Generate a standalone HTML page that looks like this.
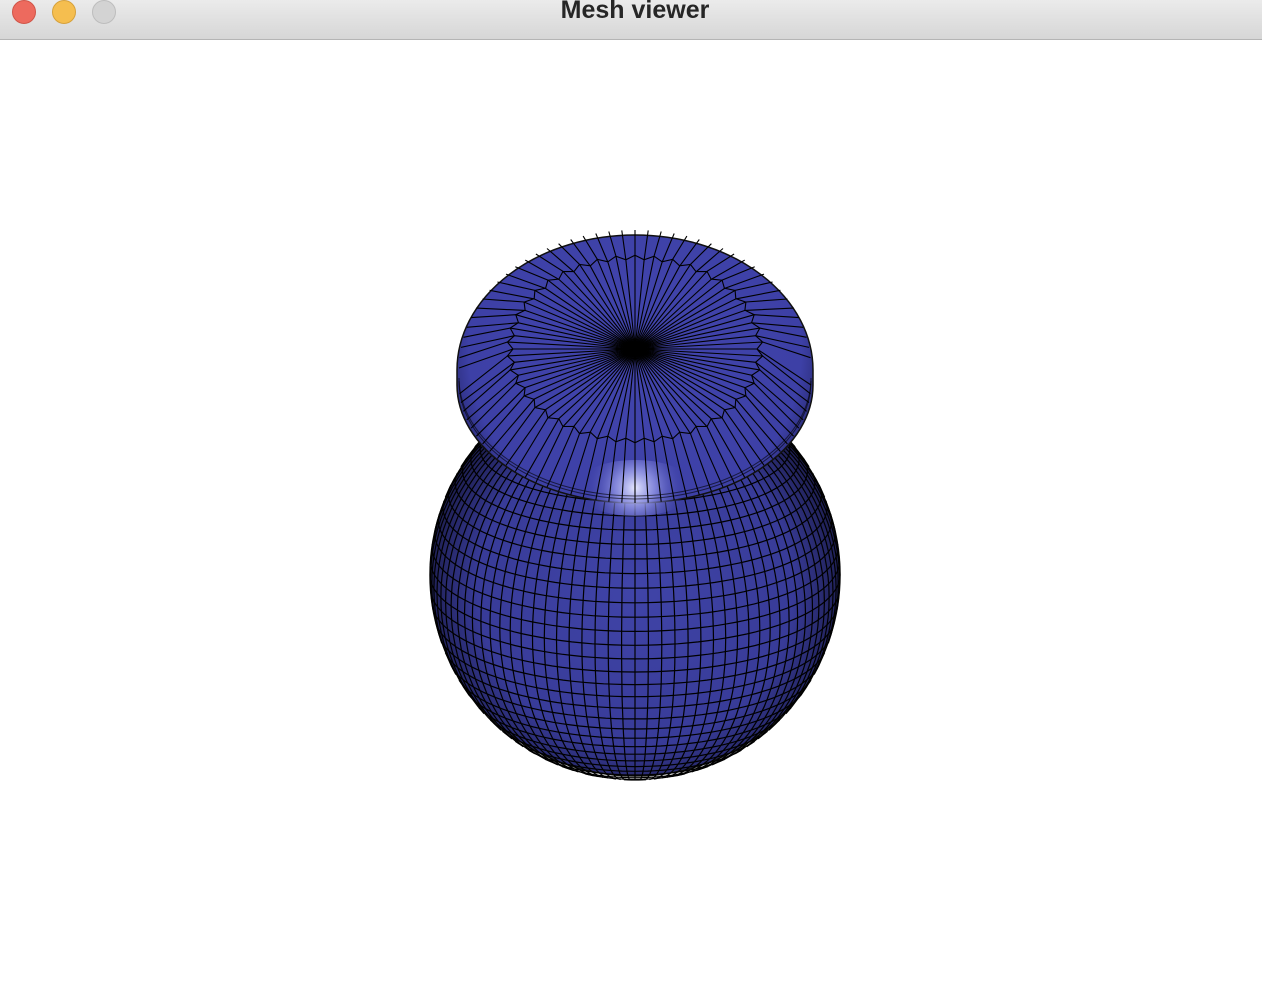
<!DOCTYPE html>
<html><head><meta charset="utf-8"><style>
html,body{margin:0;padding:0;width:1262px;height:994px;overflow:hidden;background:#fff}
.tb{position:absolute;left:0;top:0;width:1262px;height:39px;background:linear-gradient(#ebebeb,#d6d6d6);border-bottom:1px solid #b4b4b4}
.d{position:absolute;top:0;width:24px;height:24px;border-radius:50%}
.t{position:absolute;left:4px;width:1262px;top:-4px;text-align:center;font:bold 25px "Liberation Sans",sans-serif;color:#262626}
svg{position:absolute;left:0;top:0}
</style></head><body>
<div class="tb"><div class="d" style="left:12px;background:#ed6a5e;border:1px solid #d05548;box-sizing:border-box"></div><div class="d" style="left:52px;background:#f5be4f;border:1px solid #d6a13b;box-sizing:border-box"></div><div class="d" style="left:92px;background:#d3d3d3;border:1px solid #bdbdbd;box-sizing:border-box"></div><div class="t">Mesh viewer</div></div>
<svg id="s" width="1262" height="994" viewBox="0 0 1262 994">
<defs>
<radialGradient id="gb" cx="635" cy="590" r="210" gradientUnits="userSpaceOnUse"><stop offset="0" stop-color="#4044a8"/><stop offset="0.75" stop-color="#383b98"/><stop offset="1" stop-color="#1d1e50"/></radialGradient>
<radialGradient id="gc" cx="635" cy="350" r="185" gradientUnits="userSpaceOnUse"><stop offset="0" stop-color="#4245ad"/><stop offset="0.9" stop-color="#3d40a6"/><stop offset="1" stop-color="#2e3080"/></radialGradient>
<radialGradient id="hl" cx="635" cy="488" r="50" gradientUnits="userSpaceOnUse"><stop offset="0" stop-color="#e6e8ff"/><stop offset="0.4" stop-color="#9fa3f0" stop-opacity="0.7"/><stop offset="1" stop-color="#4245ad" stop-opacity="0"/></radialGradient>
</defs>
<g id="g"></g>
</svg>
<script>
var g=document.getElementById('g'),h='';
var cx=635,cy=575,R=205,T=0.35,ct=Math.cos(T),st=Math.sin(T);
h+='<ellipse cx="635" cy="575" rx="205" ry="201" fill="url(#gb)" stroke="#111" stroke-width="1.5"/>';
function P(th,ph){var x=Math.sin(ph)*Math.sin(th),y=Math.cos(ph),z=Math.sin(ph)*Math.cos(th);var Y=y*ct-z*st,Z=y*st+z*ct;return [cx+R*x,cy-R*Y,Z];}
var N=96;
for(var i=0;i<N;i++){var th=2*Math.PI*i/N,d='',on=false;for(var k=0;k<=60;k++){var p=P(th,Math.PI*k/60);if(p[2]>0){d+=(on?'L':'M')+p[0].toFixed(1)+' '+p[1].toFixed(1);on=true}else on=false;}if(d)h+='<path d="'+d+'" fill="none" stroke="#000" stroke-width="1.2"/>';}
for(var j=1;j<44;j++){var ph=Math.PI*j/44,d='',on=false;for(var k=0;k<=120;k++){var p=P(2*Math.PI*k/120,ph);if(p[2]>0){d+=(on?'L':'M')+p[0].toFixed(1)+' '+p[1].toFixed(1);on=true}else on=false;}if(d)h+='<path d="'+d+'" fill="none" stroke="#000" stroke-width="1.2"/>';}
h+='<path d="M457 370 A178 135 0 0 1 813 370 L813 385 A178 118 0 0 1 457 385 Z" fill="url(#gc)" stroke="#111" stroke-width="1.5"/>';
h+='<ellipse cx="635" cy="488" rx="60" ry="28" fill="url(#hl)"/>';
var M=84,ccx=635,ccy=349;
for(var i=0;i<M;i++){var a=2*Math.PI*i/M,s=Math.sin(a),c=Math.cos(a);
 var ex=ccx+176*s, ey=(c>0? 385+118*c : 368+138*c);
 var mx=ccx+(i%2?122:128)*s, my=ccy+(i%2?89:94)*c;
 h+='<path d="M'+ccx+' '+ccy+'L'+mx.toFixed(1)+' '+my.toFixed(1)+'L'+ex.toFixed(1)+' '+ey.toFixed(1)+'" fill="none" stroke="#000" stroke-width="1.1"/>';}
var d='';for(var i=0;i<=M;i++){var a=2*Math.PI*i/M,r=(i%2?122:128);d+=(i?'L':'M')+(ccx+r*Math.sin(a)).toFixed(1)+' '+(ccy+r*0.733*Math.cos(a)).toFixed(1);}
h+='<path d="'+d+'" fill="none" stroke="#000" stroke-width="1.1"/>';
[0.4,0.7].forEach(function(f){h+='<path d="M'+(ccx-176)+' 385 A176 118 0 0 0 '+(ccx+176)+' 385" fill="none" stroke="#000" stroke-width="1" transform="translate(0,'+(-10*f)+')" opacity="0.6"/>'});
h+='<ellipse cx="635" cy="349" rx="9" ry="6" fill="#000"/>';
g.innerHTML=h;
</script>
</body></html>
